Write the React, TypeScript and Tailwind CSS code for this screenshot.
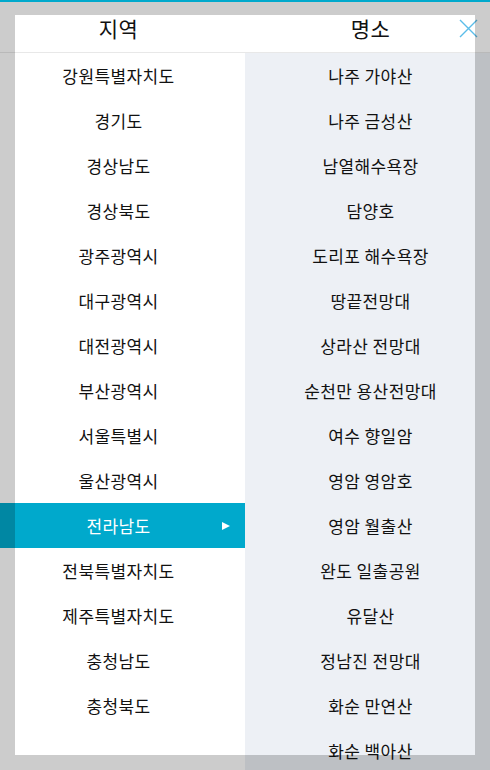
import React from "react";

const regions = [
  "강원특별자치도",
  "경기도",
  "경상남도",
  "경상북도",
  "광주광역시",
  "대구광역시",
  "대전광역시",
  "부산광역시",
  "서울특별시",
  "울산광역시",
  "전라남도",
  "전북특별자치도",
  "제주특별자치도",
  "충청남도",
  "충청북도",
];

const spots = [
  "나주 가야산",
  "나주 금성산",
  "남열해수욕장",
  "담양호",
  "도리포 해수욕장",
  "땅끝전망대",
  "상라산 전망대",
  "순천만 용산전망대",
  "여수 향일암",
  "영암 영암호",
  "영암 월출산",
  "완도 일출공원",
  "유달산",
  "정남진 전망대",
  "화순 만연산",
  "화순 백아산",
];

export default function App() {
  const selected = "전라남도";

  return (
    <div
      className="relative h-[770px] w-[490px] overflow-hidden border-t-2 border-[#00a9cc] bg-white text-[#111]"
      style={{ fontFamily: '"Noto Sans CJK KR", "Noto Sans", sans-serif' }}
    >
      {/* header */}
      <div className="flex h-[51px] border-b border-[#e8e8e8] bg-white">
        <div className="flex w-[245px] items-center justify-center pr-[8px] pt-[3px] text-[21px] tracking-[0.5px]">
          지역
        </div>
        <div className="flex flex-1 items-center justify-center pl-[6px] pt-[3px] text-[21px] tracking-[0.5px]">
          명소
        </div>
      </div>

      <button className="absolute right-[12px] top-[17px] p-0">
        <svg width="19" height="19" viewBox="0 0 19 19" fill="none" stroke="#5bbde9" strokeWidth="1.4">
          <path d="M1 1L18 18M18 1L1 18" />
        </svg>
      </button>

      {/* lists */}
      <div className="flex">
        <ul className="w-[245px] bg-white">
          {regions.map((r) => (
            <li
              key={r}
              className={
                r === selected
                  ? "relative flex h-[45px] items-center justify-center bg-[#00a9cc] pr-[8px] text-[17px] tracking-[0.4px] text-white"
                  : "flex h-[45px] items-center justify-center pr-[8px] text-[17px] tracking-[0.4px]"
              }
            >
              {r}
              {r === selected && (
                <svg className="absolute right-[15px] top-[19px]" width="8" height="8" viewBox="0 0 8 8">
                  <path d="M0 0L8 4L0 8Z" fill="#fff" />
                </svg>
              )}
            </li>
          ))}
        </ul>
        <ul className="flex-1 bg-[#edf0f5]">
          {spots.map((s) => (
            <li key={s} className="flex h-[45px] items-center justify-center pl-[6px] text-[17px] tracking-[0.4px]">
              {s}
            </li>
          ))}
        </ul>
      </div>

      {/* dim frame */}
      <div className="pointer-events-none absolute inset-0 -top-[2px] border-[15px] border-black/20" />
    </div>
  );
}
